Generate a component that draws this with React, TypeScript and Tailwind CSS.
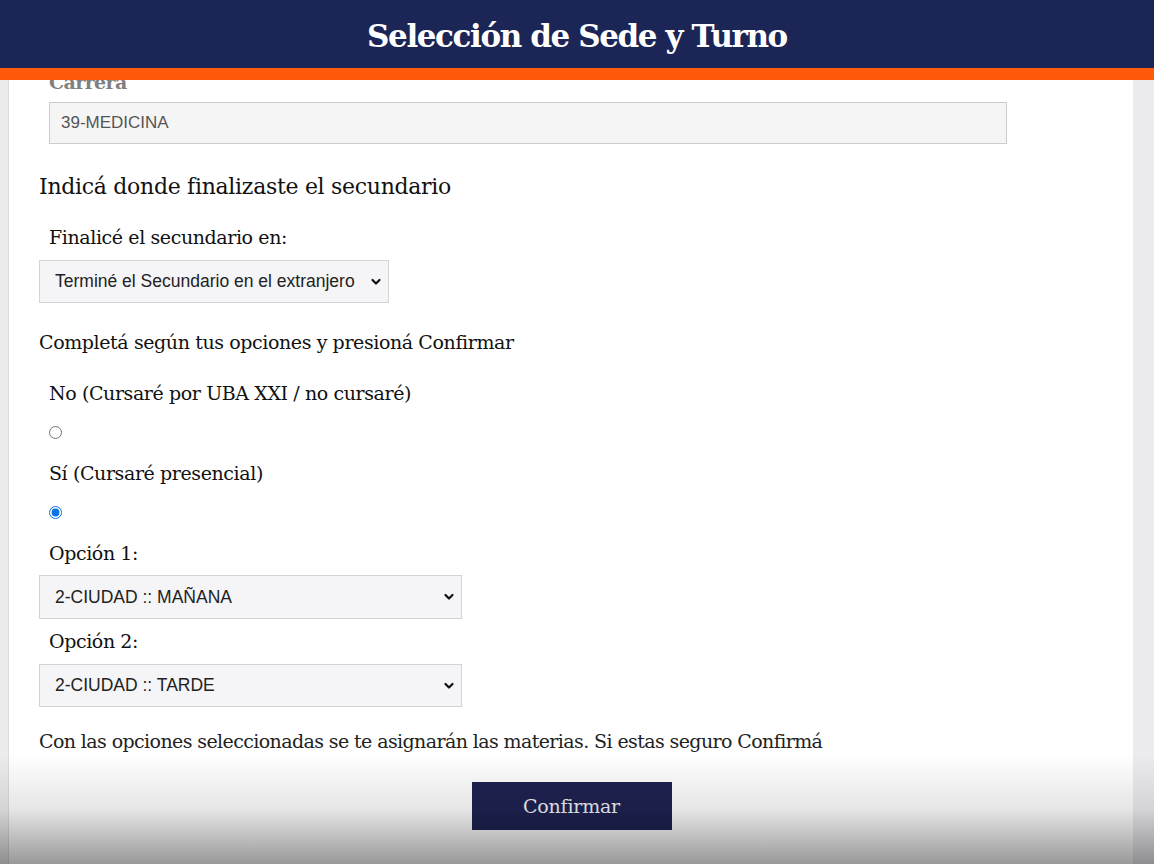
import React, { useState } from 'react';

const SERIF = "font-['DejaVu_Serif',serif]";

const Chevron: React.FC = () => (
  <svg
    width="12"
    height="8"
    viewBox="0 0 12 8"
    className="pointer-events-none absolute right-[7px] top-1/2 -translate-y-1/2"
  >
    <path d="M2.5 2 L6 5.5 L9.5 2" fill="none" stroke="#111" strokeWidth="2.2" strokeLinecap="round" strokeLinejoin="round" />
  </svg>
);

type SelectProps = {
  value: string;
  options: string[];
  width: string;
  onChange: (v: string) => void;
};

const Select: React.FC<SelectProps> = ({ value, options, width, onChange }) => (
  <div className={`relative ${width}`}>
    <select
      value={value}
      onChange={(e) => onChange(e.target.value)}
      className="h-full w-full appearance-none border border-[#d4d4d8] bg-[#f5f5f7] pl-[15px] pr-8 font-['Liberation_Sans',sans-serif] text-[17.5px] text-[#222] outline-none"
    >
      {options.map((o) => (
        <option key={o} value={o}>
          {o}
        </option>
      ))}
    </select>
    <Chevron />
  </div>
);

const TURNOS = ['2-CIUDAD :: MAÑANA', '2-CIUDAD :: TARDE', '2-CIUDAD :: NOCHE'];

const LABEL = `${SERIF} block text-[19px] leading-[26px] tracking-[-0.4px] text-[#111]`;

export default function App() {
  const [secundario, setSecundario] = useState('Terminé el Secundario en el extranjero');
  const [presencial, setPresencial] = useState<'no' | 'si'>('si');
  const [op1, setOp1] = useState(TURNOS[0]);
  const [op2, setOp2] = useState(TURNOS[1]);

  return (
    <div className="relative h-[864px] w-full overflow-hidden bg-[#ececef]">
      {/* header fijo */}
      <header className="fixed inset-x-0 top-0 z-10">
        <div className="flex h-[68px] items-center justify-center bg-[#1b2656] pt-[5px]">
          <h1 className={`${SERIF} text-[31px] font-bold tracking-[-1.4px] text-white`}>
            Selección de Sede y Turno
          </h1>
        </div>
        <div className="h-[12px] bg-[#ff5a0a]" />
      </header>

      <div className="ml-[8px] h-full w-[1125px] border-l border-[#dcdcde] bg-white pl-[30px]">
        <div className="pt-[69px]">
          <label className={`${SERIF} ml-[10px] block text-[19px] font-semibold leading-[26px] tracking-[-0.6px] text-[#808080]`}>
            Carrera
          </label>
          <input
            readOnly
            value="39-MEDICINA"
            className="ml-[10px] mt-[7px] block h-[42px] w-[958px] border border-[#ccc] bg-[#f5f5f5] px-[11px] font-['Liberation_Sans',sans-serif] text-[17px] text-[#555] outline-none"
          />
        </div>

        <h2 className={`${SERIF} mt-[28px] text-[22px] leading-[30px] tracking-[-0.3px] text-[#111]`}>
          Indicá donde finalizaste el secundario
        </h2>

        <label className={`${LABEL} ml-[10px] mt-[22px]`}>Finalicé el secundario en:</label>
        <div className="mt-[10px] h-[43px]">
          <Select
            value={secundario}
            onChange={setSecundario}
            width="h-full w-[350px]"
            options={['Terminé el Secundario en el extranjero', 'Terminé el Secundario en Argentina']}
          />
        </div>

        <p className={`${LABEL} mt-[26px]`}>Completá según tus opciones y presioná Confirmar</p>

        <div className="ml-[10px]">
          <label className={`${LABEL} mt-[25px]`}>No (Cursaré por UBA XXI / no cursaré)</label>
          <input
            type="radio"
            name="presencial"
            checked={presencial === 'no'}
            onChange={() => setPresencial('no')}
            className="mt-[20px] block h-[13px] w-[13px] accent-[#0b74e5]"
          />
          <label className={`${LABEL} mt-[21px]`}>Sí (Cursaré presencial)</label>
          <input
            type="radio"
            name="presencial"
            checked={presencial === 'si'}
            onChange={() => setPresencial('si')}
            className="mt-[20px] block h-[13px] w-[13px] accent-[#0b74e5]"
          />
          <label className={`${LABEL} mt-[21px]`}>Opción 1:</label>
        </div>
        <div className="mt-[9px] h-[44px]">
          <Select value={op1} onChange={setOp1} width="h-full w-[423px]" options={TURNOS} />
        </div>
        <label className={`${LABEL} ml-[10px] mt-[9px]`}>Opción 2:</label>
        <div className="mt-[10px] h-[43px]">
          <Select value={op2} onChange={setOp2} width="h-full w-[423px]" options={TURNOS} />
        </div>

        <p className={`${SERIF} mt-[21px] text-[19px] leading-[26px] tracking-[-0.6px] text-[#222]`}>
          Con las opciones seleccionadas se te asignarán las materias. Si estas seguro Confirmá
        </p>

        <div className="mt-[28px] flex w-[1065px] justify-center">
          <button className={`${SERIF} h-[48px] w-[200px] bg-[#1e2251] text-[19px] tracking-[-0.2px] text-[#f0f0f6]`}>
            Confirmar
          </button>
        </div>
      </div>

      {/* sombra inferior */}
      <div className="pointer-events-none absolute inset-x-0 bottom-0 h-[110px] bg-gradient-to-b from-transparent via-black/10 to-black/40" />
    </div>
  );
}
